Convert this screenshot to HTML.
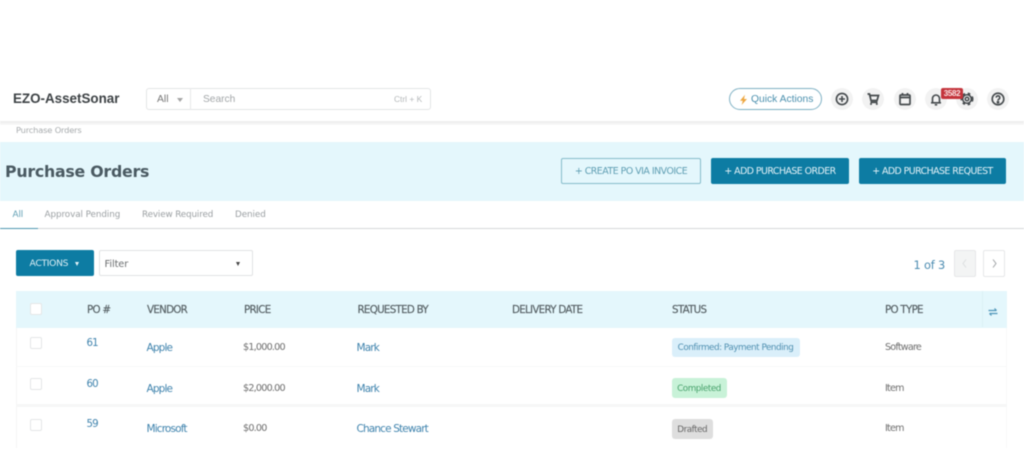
<!DOCTYPE html>
<html lang="en">
<head>
<meta charset="utf-8">
<title>Purchase Orders</title>
<style>
html,body{margin:0;padding:0;background:#fff}
body{width:1024px;height:457px;overflow:hidden;position:relative;font-family:"Liberation Sans",sans-serif;color:#555}
#p{position:absolute;left:0;top:0;width:1024px;height:457px;filter:blur(.45px)}
.a{position:absolute;white-space:nowrap}
.t{position:absolute;white-space:nowrap;line-height:14px;height:14px}
.hd{font-size:10.3px;color:#545e62;top:303px;font-family:"DejaVu Sans",sans-serif;letter-spacing:-.72px;-webkit-text-stroke:.15px #545e62}
.lnk{font-size:10.5px;color:#3f83ad;font-family:"DejaVu Sans",sans-serif;letter-spacing:-.85px}
.num{font-size:10.2px;color:#3f83ad;font-family:"DejaVu Sans",sans-serif;letter-spacing:-.9px}
.val{font-size:9.6px;color:#6d6d6d;font-family:"DejaVu Sans",sans-serif;letter-spacing:-.78px}
.cb{position:absolute;left:29.5px;width:10px;height:10px;border:1px solid #e4e6e7;border-radius:2px;background:#fff}
.ic{position:absolute;top:88px;width:22px;height:22px;border-radius:50%;background:#f2f2f2}
.ic svg{position:absolute;left:0;top:0}
.btn{position:absolute;top:158px;height:26px;line-height:27px;text-align:center;border-radius:2px;font-family:"DejaVu Sans",sans-serif;font-size:9.4px;box-sizing:border-box}
.fill{background:#0d7ca3;color:#e6f3f8}
.tab{position:absolute;top:208px;font-family:"DejaVu Sans",sans-serif;font-size:8.8px;line-height:14px;color:#9a9fa2;white-space:nowrap;letter-spacing:-.08px}
.badge{position:absolute;border-radius:3px;font-family:"DejaVu Sans",sans-serif;font-size:8.8px;letter-spacing:-.47px;white-space:nowrap;text-align:center}
</style>
</head>
<body>
<div id="p">

<!-- header -->
<div class="a" style="left:0;top:121px;width:1024px;height:4px;background:linear-gradient(#ececec,#f8f8f8)"></div>
<div class="t" style="left:13px;top:92px;font-size:13.4px;font-weight:bold;color:#3c4144">EZO-AssetSonar</div>

<div class="a" style="left:146px;top:88px;width:285px;height:22px;box-sizing:border-box;border:1px solid #e3e5e6;border-radius:3px"></div>
<div class="a" style="left:190px;top:88px;width:1px;height:22px;background:#e8e9ea"></div>
<div class="t" style="left:157px;top:93px;font-size:10.4px;color:#777">All</div>
<div class="a" style="left:177px;top:98px;width:0;height:0;border-left:3px solid transparent;border-right:3px solid transparent;border-top:4px solid #a5a5a5"></div>
<div class="t" style="left:203px;top:91.500px;font-size:10.2px;color:#a2a6a8;line-height:15px">Search</div>
<div class="t" style="left:394px;top:92px;font-size:8.4px;color:#b5b8ba">Ctrl + K</div>

<!-- quick actions -->
<div class="a" style="left:729px;top:88px;width:93px;height:22px;box-sizing:border-box;border:1px solid #7fb1c4;border-radius:11px"></div>
<svg class="a" style="left:738px;top:94px" width="11" height="12" viewBox="0 0 11 12"><path d="M7 .8 2 6.8h2.8L3.6 11 9 5H6z" fill="#eda63f"/></svg>
<div class="t" style="left:751px;top:92.500px;font-size:10.3px;color:#4b90ae">Quick Actions</div>

<!-- circle icons -->
<div class="ic" style="left:831px"><svg width="22" height="22" viewBox="0 0 22 22" fill="none" stroke="#44494c" stroke-width="1.6"><circle cx="11" cy="11" r="5.6"/><path d="M11 8v6M8 11h6"/></svg></div>
<div class="ic" style="left:862px"><svg width="22" height="22" viewBox="0 0 22 22" fill="none" stroke="#44494c" stroke-width="1.7"><path d="M5.5 6h2l1.500 6.500h6l1.500-5H8"/><path d="M8.500 14.300h7"/><circle cx="9" cy="16" r="1" fill="#44494c" stroke="none"/><circle cx="14.800" cy="16" r="1" fill="#44494c" stroke="none"/></svg></div>
<div class="ic" style="left:894px"><svg width="22" height="22" viewBox="0 0 22 22" fill="none" stroke="#44494c" stroke-width="1.7"><rect x="6" y="7" width="10" height="9.500" rx="1"/><path d="M6 9.500h10M8.500 5v2.500M13.500 5v2.500"/></svg></div>
<div class="ic" style="left:925px"><svg width="22" height="22" viewBox="0 0 22 22" fill="none" stroke="#44494c" stroke-width="1.6"><path d="M7.500 14.500V10.500a3.500 3.500 0 0 1 7 0v4"/><path d="M6 14.800h10"/><path d="M9.800 16.800h2.400"/></svg></div>
<div class="ic" style="left:956px"><svg width="22" height="22" viewBox="0 0 22 22" fill="none" stroke="#44494c"><circle cx="11" cy="11" r="1.800" stroke-width="1.500"/><circle cx="11" cy="11" r="4.300" stroke-width="1.500"/><circle cx="11" cy="11" r="5.600" stroke-width="1.800" stroke-dasharray="2.600 2.800"/></svg></div>
<div class="ic" style="left:987px"><svg width="22" height="22" viewBox="0 0 22 22" fill="none" stroke="#44494c" stroke-width="1.6"><circle cx="11" cy="11" r="5.800"/><path d="M9.200 9.600a1.800 1.800 0 1 1 2.800 1.500c-.7.400-1 .7-1 1.400"/><circle cx="11" cy="14.200" r=".6" fill="#44494c"/></svg></div>
<div class="a" style="left:941px;top:88px;width:22px;height:11px;background:#c4343c;border-radius:2px;color:#fbe4e4;font-size:8px;font-weight:bold;line-height:11px;text-align:center;letter-spacing:-.3px">3582</div>

<!-- breadcrumb -->
<div class="t" style="left:16px;top:122.500px;font-family:'DejaVu Sans',sans-serif;font-size:8.3px;color:#a6aaac;letter-spacing:-.18px">Purchase Orders</div>

<!-- banner -->
<div class="a" style="left:0;top:142px;width:1024px;height:59px;background:#e4f7fc"></div>
<div class="a" style="left:5px;top:160.500px;height:22px;line-height:22px;font-family:'DejaVu Sans',sans-serif;font-weight:bold;font-size:15.800px;color:#4a5a62;letter-spacing:-.25px">Purchase Orders</div>
<div class="btn" style="left:561px;width:140px;border:1px solid #86bccb;color:#5d9db2;line-height:25px;letter-spacing:-.48px">+ CREATE PO VIA INVOICE</div>
<div class="btn fill" style="left:711px;width:138px;letter-spacing:-.52px">+ ADD PURCHASE ORDER</div>
<div class="btn fill" style="left:859px;width:147px;letter-spacing:-.54px">+ ADD PURCHASE REQUEST</div>

<!-- tabs -->
<div class="tab" style="left:12.500px;color:#5d9db2">All</div>
<div class="tab" style="left:44.500px">Approval Pending</div>
<div class="tab" style="left:142px;letter-spacing:-.14px">Review Required</div>
<div class="tab" style="left:235px">Denied</div>
<div class="a" style="left:0;top:228px;width:1024px;height:1px;background:#d6d8d9"></div>
<div class="a" style="left:0;top:227.500px;width:38px;height:1.500px;background:#4f97b1"></div>

<!-- toolbar -->
<div class="a" style="left:16px;top:250px;width:77.500px;height:26px;background:#0d7ca3;border-radius:2px"></div>
<div class="t" style="left:29.500px;top:256.500px;font-family:'DejaVu Sans',sans-serif;font-size:9.200px;color:#dff0f6;letter-spacing:-.3px">ACTIONS</div>
<div class="a" style="left:74.500px;top:262px;width:0;height:0;border-left:2.500px solid transparent;border-right:2.500px solid transparent;border-top:4px solid #e6f3f8"></div>
<div class="a" style="left:99px;top:250px;width:154px;height:26px;box-sizing:border-box;border:1px solid #e1e3e4;border-radius:2px"></div>
<div class="t" style="left:104.500px;top:258px;font-family:'DejaVu Sans',sans-serif;font-size:9.800px;color:#6a6d6f;letter-spacing:-.1px">Filter</div>
<div class="a" style="left:236px;top:262px;width:0;height:0;border-left:2.500px solid transparent;border-right:2.500px solid transparent;border-top:4px solid #444"></div>

<div class="t" style="left:913.500px;top:258px;font-family:'DejaVu Sans',sans-serif;font-size:11.400px;color:#4c8cb1;letter-spacing:-.2px">1 of 3</div>
<div class="a" style="left:954px;top:250px;width:22px;height:27px;box-sizing:border-box;background:#f3f4f4;border:1px solid #e6e7e8;border-radius:2px"></div>
<svg class="a" style="left:961px;top:258px" width="8" height="11" viewBox="0 0 8 11" fill="none" stroke="#dcdfe0" stroke-width="1"><path d="M5 1.500 2 5.500 5 9.500"/></svg>
<div class="a" style="left:983px;top:250px;width:22px;height:27px;box-sizing:border-box;background:#fff;border:1px solid #e6e7e8;border-radius:2px"></div>
<svg class="a" style="left:990px;top:258px" width="8" height="11" viewBox="0 0 8 11" fill="none" stroke="#a0a4a6" stroke-width="1"><path d="M3 1.500l3 4-3 4"/></svg>

<!-- table -->
<div class="a" style="left:16px;top:291px;width:991px;height:37px;background:#e4f7fc"></div>
<div class="a" style="left:982px;top:291px;width:1px;height:36px;background:#dcf0f6"></div>
<div class="a" style="left:16px;top:328px;width:1px;height:120px;background:#f6f6f6"></div>
<div class="a" style="left:1006px;top:328px;width:1px;height:120px;background:#f8f8f8"></div>
<div class="a" style="left:16px;top:366px;width:991px;height:1px;background:#f7f8f8"></div>
<div class="a" style="left:16px;top:404px;width:991px;height:3px;background:#f6f7f7"></div>

<div class="cb" style="top:303px"></div>
<div class="cb" style="top:337px"></div>
<div class="cb" style="top:378px"></div>
<div class="cb" style="top:419px"></div>

<div class="t hd" style="left:87px">PO #</div>
<div class="t hd" style="left:147px">VENDOR</div>
<div class="t hd" style="left:244px">PRICE</div>
<div class="t hd" style="left:357.500px">REQUESTED BY</div>
<div class="t hd" style="left:512px">DELIVERY DATE</div>
<div class="t hd" style="left:672px">STATUS</div>
<div class="t hd" style="left:885px">PO TYPE</div>
<svg class="a" style="left:988px;top:307px" width="10" height="10" viewBox="0 0 10 10" fill="none" stroke="#4d95b8" stroke-width="1.200"><path d="M.5 3.500h8M6.500 1.500l2 2M9.500 6.500h-8M3.500 8.500l-2-2"/></svg>

<div class="t num" style="left:86.500px;top:336.500px">61</div>
<div class="t num" style="left:86.500px;top:377.500px">60</div>
<div class="t num" style="left:86.500px;top:418px">59</div>

<div class="t lnk" style="left:146.500px;top:341px">Apple</div>
<div class="t lnk" style="left:146.500px;top:381.500px">Apple</div>
<div class="t lnk" style="left:146.500px;top:422px">Microsoft</div>

<div class="t val" style="left:243px;top:340.500px">$1,000.00</div>
<div class="t val" style="left:243px;top:381.500px">$2,000.00</div>
<div class="t val" style="left:243px;top:422px">$0.00</div>

<div class="t lnk" style="left:356.500px;top:340.500px">Mark</div>
<div class="t lnk" style="left:356.500px;top:381.500px">Mark</div>
<div class="t lnk" style="left:356.500px;top:422px">Chance Stewart</div>

<div class="badge" style="left:671.500px;top:338px;width:128px;height:19px;line-height:21px;background:#daeffa;color:#4f8fb0">Confirmed: Payment Pending</div>
<div class="badge" style="left:671.500px;top:378px;width:55px;height:20px;line-height:23px;background:#c8f2d8;color:#48a26c">Completed</div>
<div class="badge" style="left:671.500px;top:419px;width:41.500px;height:20px;line-height:23px;background:#dedede;color:#666">Drafted</div>

<div class="t val" style="left:885px;top:340.500px">Software</div>
<div class="t val" style="left:885px;top:381.500px">Item</div>
<div class="t val" style="left:885px;top:422px">Item</div>

</div>
</body>
</html>
